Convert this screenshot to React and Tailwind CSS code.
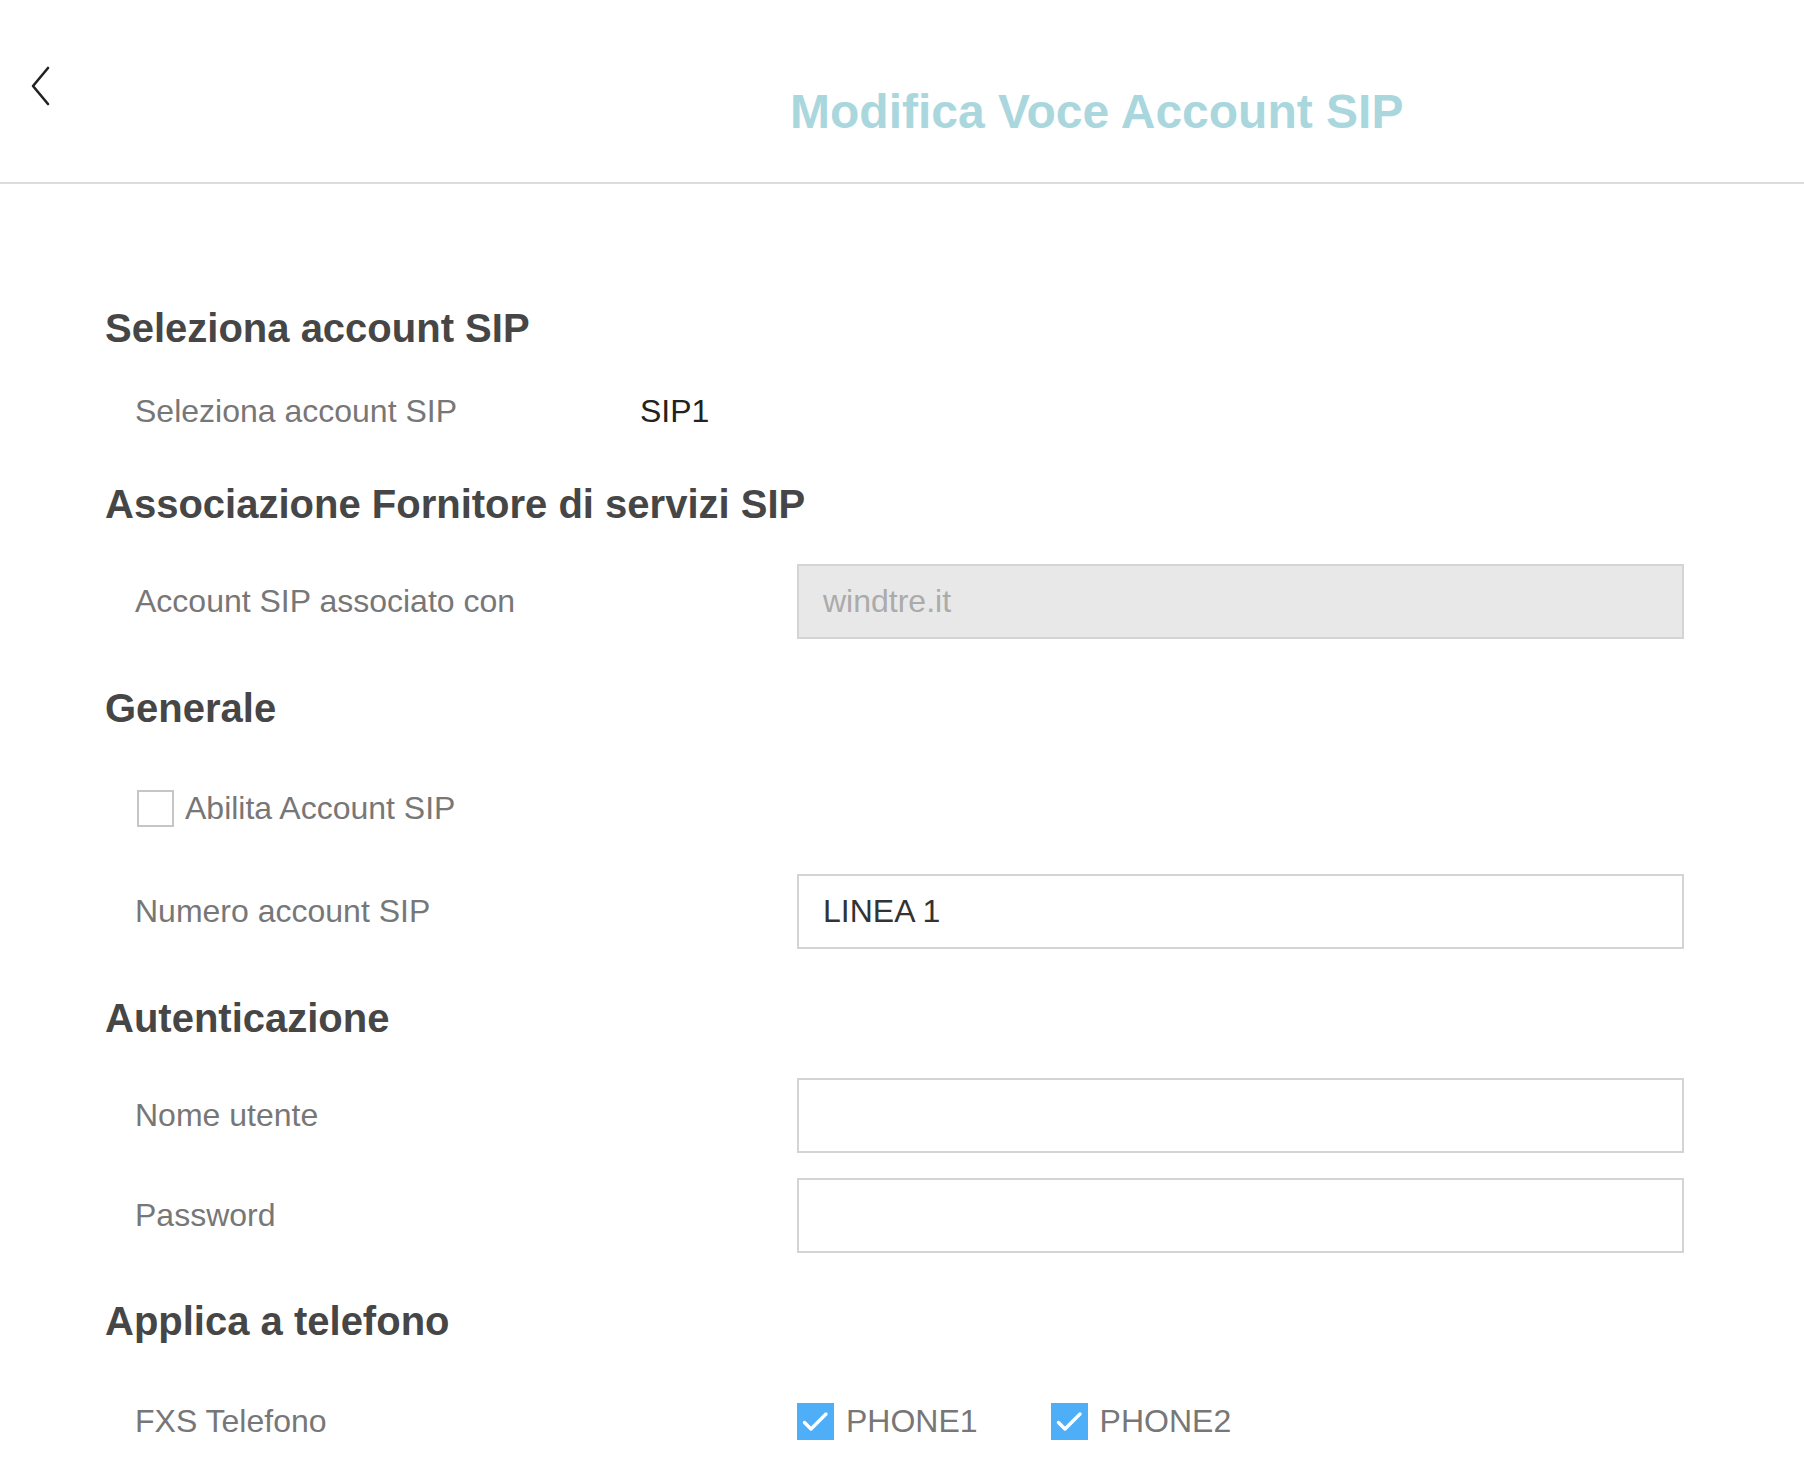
import { useState } from "react";

const font = { fontFamily: '"Liberation Sans", Arial, sans-serif' };

function Heading({ children, className = "" }) {
  return (
    <div className={`h-[56px] flex items-center text-[40px] leading-none font-bold text-[#464646] ${className}`}>
      {children}
    </div>
  );
}

function Row({ label, children, className = "" }) {
  return (
    <div className={`flex items-center h-[75px] pl-[30px] ${className}`}>
      <div className="w-[662px] shrink-0 text-[32px] leading-none text-[#777] -translate-y-px">{label}</div>
      {children}
    </div>
  );
}

function TextBox({ value, disabled }) {
  return (
    <div
      className={`w-[887px] h-[75px] flex items-center px-[24px] border-2 border-[#d2d5d7] text-[32px] leading-none ${
        disabled ? "bg-[#e8e8e8] text-[#ababab]" : "bg-white text-[#333]"
      }`}
    >
      <span className="-translate-y-px">{value}</span>
    </div>
  );
}

function Tick({ checked, onClick }) {
  return (
    <button
      onClick={onClick}
      className={`w-[37px] h-[37px] shrink-0 flex items-center justify-center ${
        checked ? "bg-[#4eaef8]" : "bg-white border-2 border-[#c6c6c6]"
      }`}
    >
      {checked && (
        <svg width="37" height="37" viewBox="0 0 37 37" fill="none">
          <path d="M7.5 19.5l6.5 6.5L29 11" stroke="white" strokeWidth="3.4" strokeLinecap="round" strokeLinejoin="round" />
        </svg>
      )}
    </button>
  );
}

export default function App() {
  const [enabled, setEnabled] = useState(false);
  const [p1, setP1] = useState(true);
  const [p2, setP2] = useState(true);

  return (
    <div className="w-[1804px] min-h-[1480px] bg-white" style={font}>
      <header className="h-[184px] border-b-2 border-[#dcdcdc] flex items-start">
        <button className="ml-[29px] mt-[66px] w-[22px] h-[40px]">
          <svg width="22" height="40" viewBox="0 0 22 40" fill="none">
            <path d="M19 2L4 20l15 18" stroke="#222" strokeWidth="2.6" strokeLinecap="round" strokeLinejoin="round" />
          </svg>
        </button>
        <h1 className="ml-[739px] mt-[88px] h-[48px] leading-none text-[48px] font-bold text-[#a9d7dd]">
          Modifica Voce Account SIP
        </h1>
      </header>

      <main className="pl-[105px]">
        <Heading className="mt-[116px]">Seleziona account SIP</Heading>
        <div className="flex items-center h-[75px] pl-[30px] mt-[18px]">
          <div className="w-[505px] text-[32px] leading-none text-[#777] -translate-y-px">Seleziona account SIP</div>
          <div className="text-[32px] leading-none text-[#222] -translate-y-px">SIP1</div>
        </div>

        <Heading className="mt-[27px]">Associazione Fornitore di servizi SIP</Heading>
        <Row label="Account SIP associato con" className="mt-[32px]">
          <TextBox value="windtre.it" disabled />
        </Row>

        <Heading className="mt-[41px]">Generale</Heading>
        <div className="flex items-center h-[75px] pl-[32px] mt-[35px]">
          <Tick checked={enabled} onClick={() => setEnabled(!enabled)} />
          <span className="ml-[11px] text-[32px] leading-none text-[#777] -translate-y-px">Abilita Account SIP</span>
        </div>
        <Row label="Numero account SIP" className="mt-[28px]">
          <TextBox value="LINEA 1" />
        </Row>

        <Heading className="mt-[41px]">Autenticazione</Heading>
        <Row label="Nome utente" className="mt-[32px]">
          <TextBox value="" />
        </Row>
        <Row label="Password" className="mt-[25px]">
          <TextBox value="" />
        </Row>

        <Heading className="mt-[40px]">Applica a telefono</Heading>
        <Row label="FXS Telefono" className="mt-[35px]">
          <div className="flex items-center">
            <Tick checked={p1} onClick={() => setP1(!p1)} />
            <span className="ml-[12px] text-[32px] leading-none text-[#777] -translate-y-px">PHONE1</span>
            <div className="ml-[73px]">
              <Tick checked={p2} onClick={() => setP2(!p2)} />
            </div>
            <span className="ml-[12px] text-[32px] leading-none text-[#777] -translate-y-px">PHONE2</span>
          </div>
        </Row>
      </main>
    </div>
  );
}
